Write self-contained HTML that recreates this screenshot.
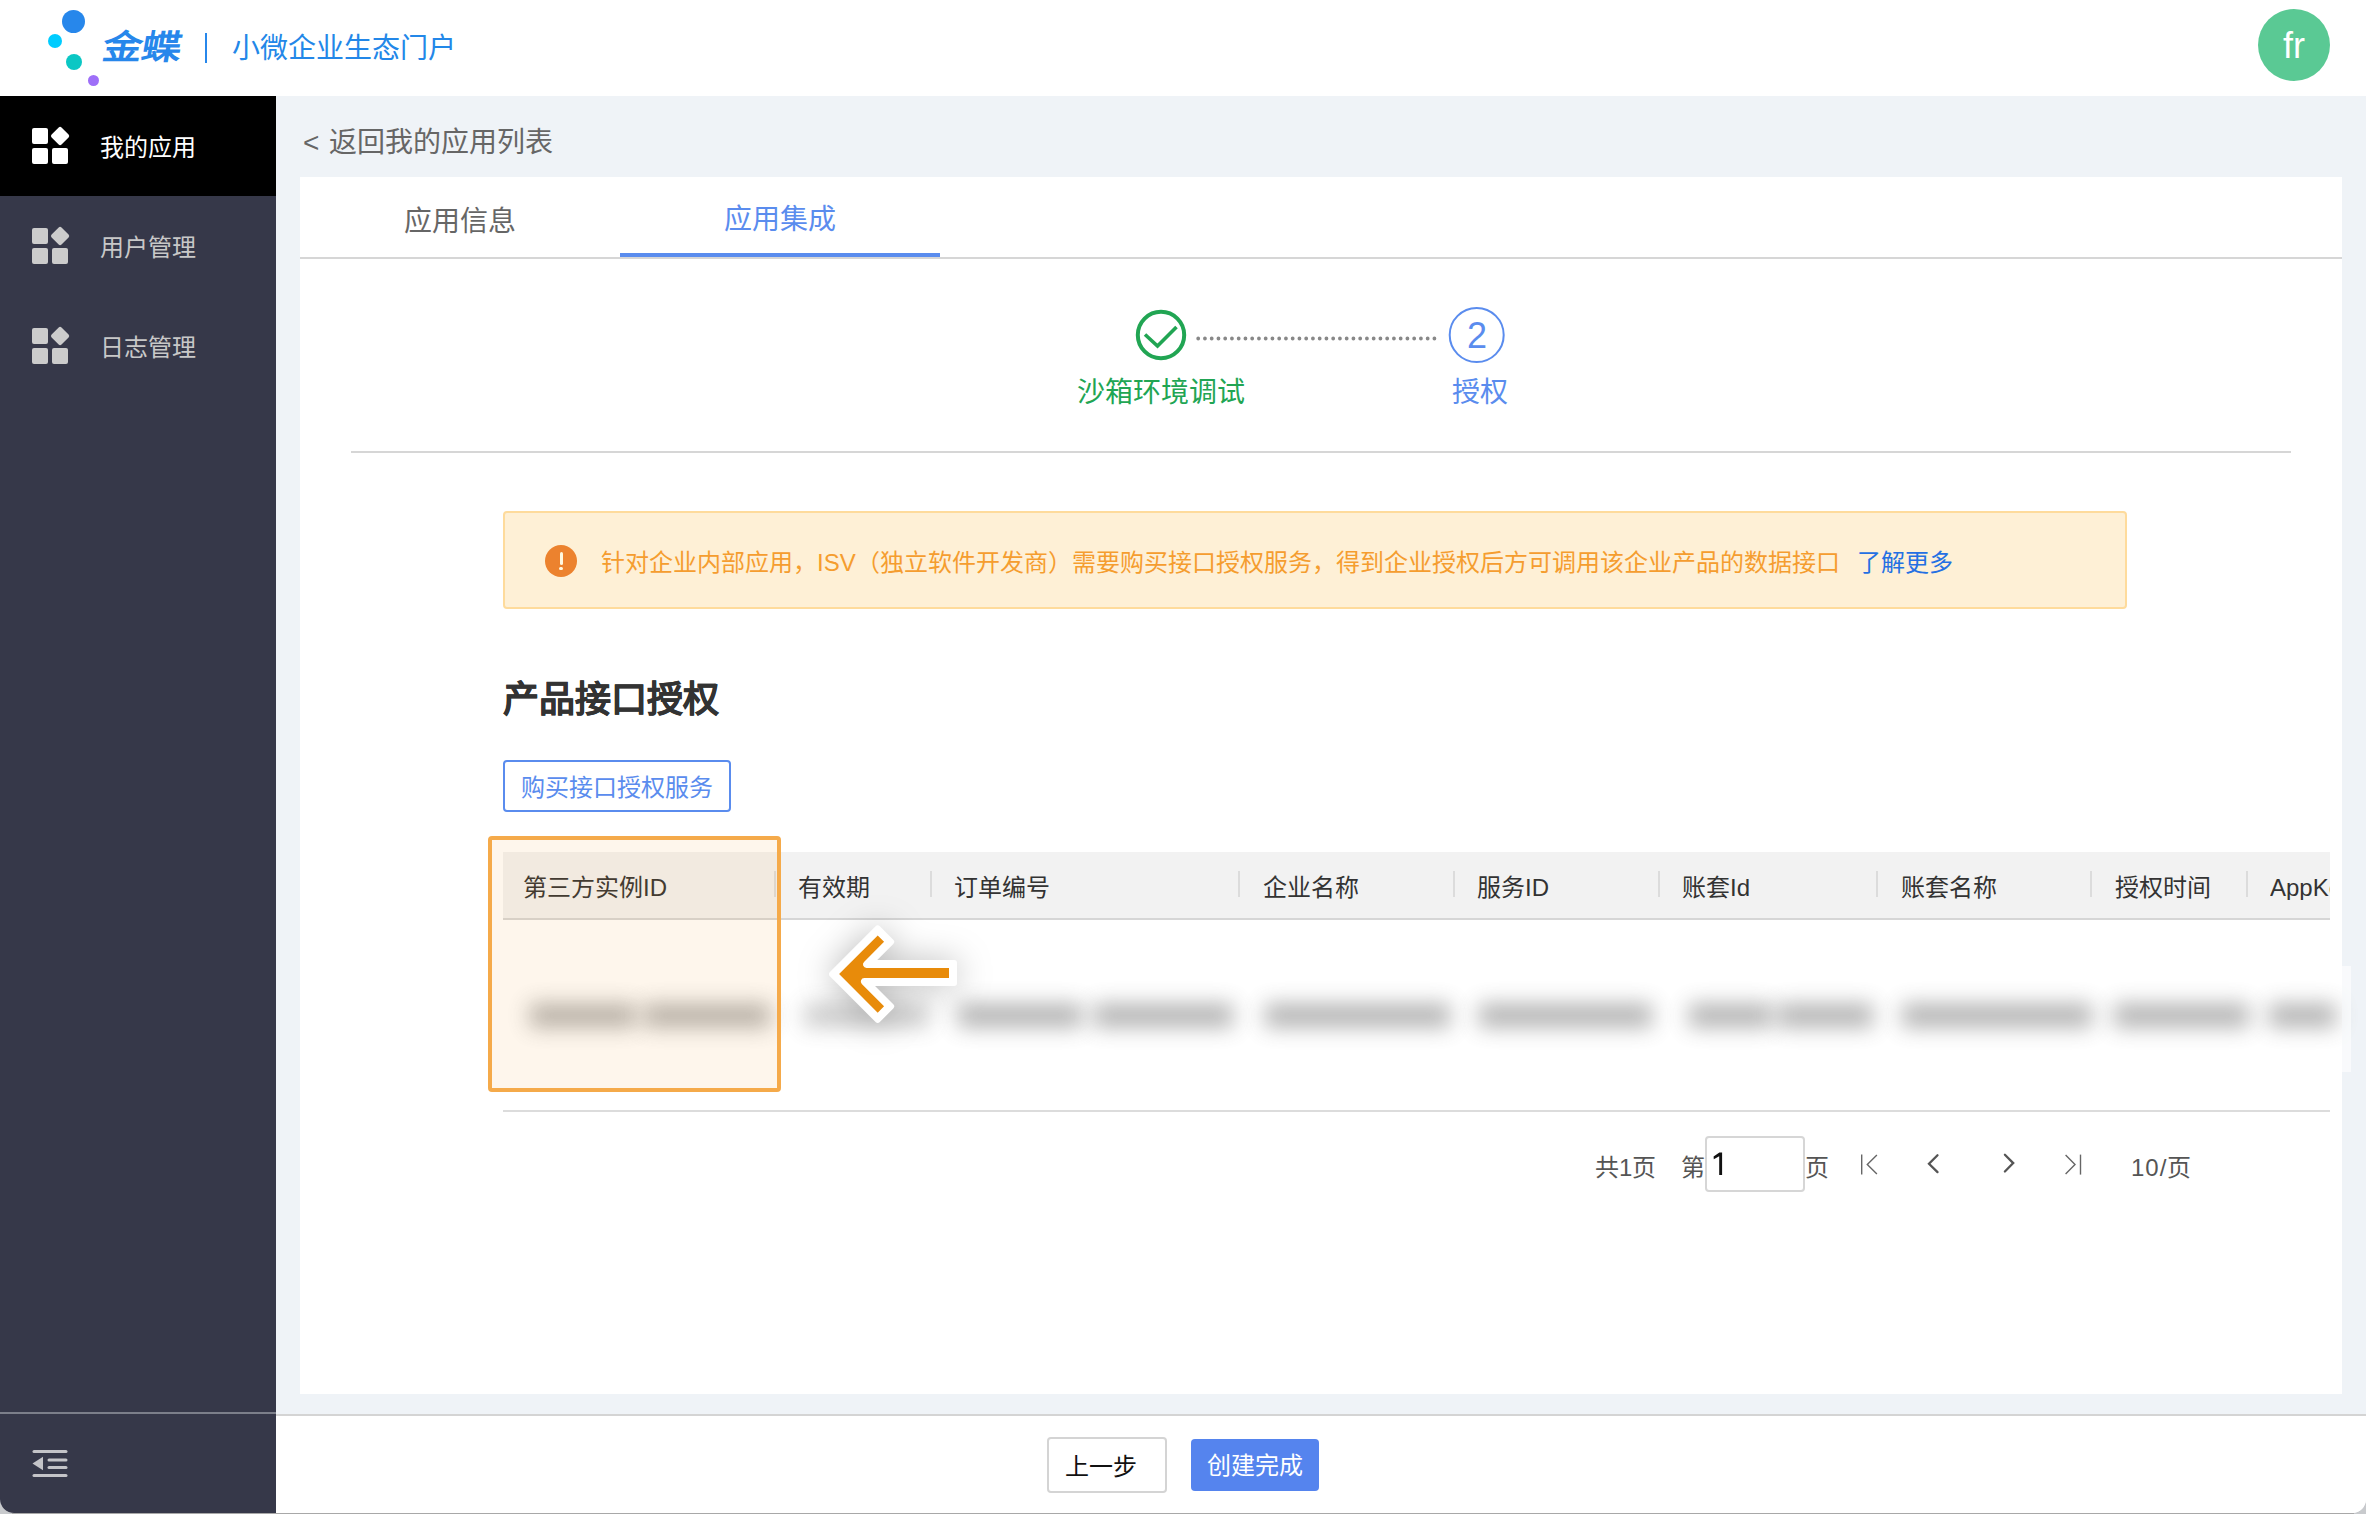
<!DOCTYPE html>
<html lang="zh-CN"><head><meta charset="utf-8">
<style>
*{margin:0;padding:0;box-sizing:border-box}
html,body{width:2366px;height:1514px;overflow:hidden}
body{position:relative;font-family:"Liberation Sans",sans-serif;background:#c8cacd}
#wrap{position:absolute;left:0;top:0;width:2366px;height:1513px;overflow:hidden;border-radius:0 0 14px 14px;background:#fff}
.a{position:absolute;white-space:nowrap;line-height:1}
#hdr{left:0;top:0;width:2366px;height:96px;background:#fff}
#side{left:0;top:96px;width:276px;height:1418px;background:#363849}
#main{left:276px;top:96px;width:2090px;height:1318px;background:#eff3f7}
#card{left:300px;top:177px;width:2042px;height:1217px;background:#fff}
#foot{left:276px;top:1414px;width:2090px;height:100px;background:#fff;border-top:2px solid #d4d4d4}
.sq{position:absolute;width:16px;height:16px;border-radius:2px}
.dm{position:absolute;width:14.2px;height:14.2px;border-radius:2px;transform:rotate(45deg)}
.th{position:absolute;top:875.5px;font-size:24px;color:#333;line-height:24px}
.sep{position:absolute;top:871px;width:2px;height:26px;background:#dcdcdc}
.blob{position:absolute;top:1004px;height:23px;background:#555;filter:blur(10.5px);opacity:.46}
</style></head><body>
<div style="position:absolute;left:12px;top:1513px;width:2342px;height:1px;background:#a8a8a8"></div>
<div id="wrap">

<!-- header -->
<div class="a" id="hdr">
  <div class="a" style="left:62px;top:10px;width:23px;height:23px;border-radius:50%;background:#2787eb"></div>
  <div class="a" style="left:48px;top:34px;width:14px;height:14px;border-radius:50%;background:#00ccff"></div>
  <div class="a" style="left:65.5px;top:54px;width:16px;height:16px;border-radius:50%;background:#0bc7c4"></div>
  <div class="a" style="left:87.5px;top:75px;width:11px;height:11px;border-radius:50%;background:#9e6ff8"></div>
  <div class="a" style="left:100px;top:30px;font-size:34px;font-weight:bold;color:#2787eb;transform:skewX(-10deg) scaleX(1.16);transform-origin:left bottom">金蝶</div>
  <div class="a" style="left:205px;top:33px;width:2px;height:30px;background:#2787eb"></div>
  <div class="a" style="left:232px;top:35px;font-size:28px;color:#2387e8">小微企业生态门户</div>
  <div class="a" style="left:2258px;top:9px;width:72px;height:72px;border-radius:50%;background:#5ac994;color:#fff;font-size:36px;text-align:center;line-height:74px">fr</div>
</div>

<!-- sidebar -->
<div class="a" id="side">
  <div class="a" style="left:0;top:0;width:276px;height:100px;background:#000"></div>
  <!-- item 1 -->
  <div class="sq" style="left:32px;top:32px;background:#fff"></div>
  <div class="sq" style="left:32px;top:52px;background:#fff"></div>
  <div class="sq" style="left:52px;top:52px;background:#fff"></div>
  <div class="dm" style="left:53.2px;top:33.3px;background:#fff"></div>
  <div class="a" style="left:100px;top:39.5px;font-size:24px;color:#fff">我的应用</div>
  <!-- item 2 -->
  <div class="sq" style="left:32px;top:132px;background:#ccc"></div>
  <div class="sq" style="left:32px;top:152px;background:#ccc"></div>
  <div class="sq" style="left:52px;top:152px;background:#ccc"></div>
  <div class="dm" style="left:53.2px;top:133.3px;background:#ccc"></div>
  <div class="a" style="left:100px;top:139.5px;font-size:24px;color:#c8c8c8">用户管理</div>
  <!-- item 3 -->
  <div class="sq" style="left:32px;top:232px;background:#ccc"></div>
  <div class="sq" style="left:32px;top:252px;background:#ccc"></div>
  <div class="sq" style="left:52px;top:252px;background:#ccc"></div>
  <div class="dm" style="left:53.2px;top:233.3px;background:#ccc"></div>
  <div class="a" style="left:100px;top:239.5px;font-size:24px;color:#c8c8c8">日志管理</div>
  <!-- divider -->
  <div class="a" style="left:0;top:1316px;width:276px;height:2px;background:#7c7f8a"></div>
  <!-- collapse icon -->
  <svg class="a" style="left:0;top:1318px" width="276" height="100" viewBox="0 1414 276 100">
    <g fill="#c4c4c8">
      <rect x="32.5" y="1450" width="35" height="3" rx="1.5"/>
      <rect x="47.5" y="1458.5" width="20" height="3" rx="1.5"/>
      <rect x="47.5" y="1466" width="20" height="3" rx="1.5"/>
      <rect x="32.5" y="1474" width="35" height="3" rx="1.5"/>
      <polygon points="32.5,1463.5 43,1456.7 43,1470.3"/>
    </g>
  </svg>
</div>

<!-- main -->
<div class="a" id="main"></div>
<div class="a" style="left:303px;top:128.5px;font-size:28px;color:#666;word-spacing:1.5px">&lt; 返回我的应用列表</div>
<div class="a" id="card"></div>

<!-- tabs -->
<div class="a" style="left:404px;top:208px;font-size:28px;color:#666">应用信息</div>
<div class="a" style="left:724px;top:206px;font-size:28px;color:#5a8cee">应用集成</div>
<div class="a" style="left:300px;top:257px;width:2042px;height:2px;background:#d6d6d6"></div>
<div class="a" style="left:620px;top:253px;width:320px;height:4px;background:#5a8cee"></div>

<!-- steps -->
<svg class="a" style="left:1100px;top:290px" width="440" height="90" viewBox="1100 290 440 90">
  <circle cx="1161" cy="335" r="23.2" fill="none" stroke="#21a553" stroke-width="4"/>
  <polyline points="1145,334.5 1157.5,346 1176.5,327" fill="none" stroke="#21a553" stroke-width="3.6"/>
  <line x1="1198.2" y1="338.5" x2="1435" y2="338.5" stroke="#888" stroke-width="3.8" stroke-dasharray="0 6.749" stroke-linecap="round"/>
  <circle cx="1476.7" cy="335" r="27" fill="none" stroke="#5a8cee" stroke-width="2"/>
</svg>
<div class="a" style="left:1467px;top:318px;font-size:36px;color:#5a8cee">2</div>
<div class="a" style="left:1077px;top:379px;font-size:28px;color:#21a553">沙箱环境调试</div>
<div class="a" style="left:1452px;top:379px;font-size:28px;color:#5a8cee">授权</div>
<div class="a" style="left:351px;top:451px;width:1940px;height:2px;background:#d6d6d6"></div>

<!-- alert -->
<div class="a" style="left:503px;top:511px;width:1624px;height:98px;background:#fef0d6;border:2px solid #fedb9c;border-radius:4px"></div>
<div class="a" style="left:545px;top:545px;width:32px;height:32px;border-radius:50%;background:#ec822e"></div>
<div class="a" style="left:559.5px;top:551.7px;width:3.2px;height:13px;border-radius:1.6px;background:#fff8e0"></div>
<div class="a" style="left:559.4px;top:566.8px;width:3.4px;height:3.4px;border-radius:50%;background:#fff8e0"></div>
<div class="a" style="left:601px;top:550.5px;font-size:24px;color:#f59d2f">针对企业内部应用，ISV（独立软件开发商）需要购买接口授权服务，得到企业授权后方可调用该企业产品的数据接口</div>
<div class="a" style="left:1857px;top:550.5px;font-size:24px;color:#2570e3">了解更多</div>

<!-- heading -->
<div class="a" style="left:503px;top:681.5px;font-size:36px;font-weight:bold;color:#333;-webkit-text-stroke:0.35px #333">产品接口授权</div>
<div class="a" style="left:503px;top:760px;width:228px;height:52px;border:2px solid #5a8cee;border-radius:4px"></div>
<div class="a" style="left:521px;top:775.5px;font-size:24px;color:#5a8cee">购买接口授权服务</div>

<!-- table -->
<div class="a" style="left:503px;top:852px;width:1827px;height:68px;background:#f2f2f2;border-bottom:2px solid #d6d6d6"></div>
<div class="th" style="left:523px">第三方实例ID</div>
<div class="sep" style="left:774px"></div>
<div class="th" style="left:798px">有效期</div>
<div class="sep" style="left:929.5px"></div>
<div class="th" style="left:954px">订单编号</div>
<div class="sep" style="left:1238px"></div>
<div class="th" style="left:1263px">企业名称</div>
<div class="sep" style="left:1452.5px"></div>
<div class="th" style="left:1477px">服务ID</div>
<div class="sep" style="left:1657.5px"></div>
<div class="th" style="left:1682px">账套Id</div>
<div class="sep" style="left:1876px"></div>
<div class="th" style="left:1901px">账套名称</div>
<div class="sep" style="left:2090px"></div>
<div class="th" style="left:2115px">授权时间</div>
<div class="sep" style="left:2245.5px"></div>
<div class="a" style="left:2270px;top:875.5px;width:60px;overflow:hidden;font-size:24px;color:#333;line-height:24px">AppKey</div>

<!-- blurred row -->
<div class="blob" style="left:530px;width:106px"></div>
<div class="blob" style="left:644px;width:126px"></div>
<div class="blob" style="left:804px;width:125px;opacity:.3"></div>
<div class="blob" style="left:958px;width:124px"></div>
<div class="blob" style="left:1094px;width:139px"></div>
<div class="blob" style="left:1265px;width:185px"></div>
<div class="blob" style="left:1479px;width:173px"></div>
<div class="blob" style="left:1689px;width:83px"></div>
<div class="blob" style="left:1778px;width:95px"></div>
<div class="blob" style="left:1902px;width:190px"></div>
<div class="blob" style="left:2114px;width:135px"></div>
<div class="blob" style="left:2269px;width:67px"></div>
<div class="a" style="left:2342px;top:966px;width:9px;height:106px;background:rgba(255,255,255,.6)"></div>
<div class="a" style="left:503px;top:1110px;width:1827px;height:2px;background:#dcdcdc"></div>

<!-- highlight -->
<div class="a" style="left:488px;top:836px;width:293px;height:256px;border:4px solid #f5aa4a;border-radius:4px;background:rgba(240,150,40,.085)"></div>

<!-- arrow -->
<svg class="a" style="left:760px;top:860px;filter:drop-shadow(0 1px 17px rgba(0,0,0,.28))" width="260" height="220" viewBox="760 860 260 220">
  <polygon fill="#fff" stroke="#fff" stroke-width="6" stroke-linejoin="round" points="832.03,974.1 877.7,928.43 891.14,941.87 870.1,962.9 954,962.9 954,983.1 867.9,983.1 891.14,1006.33 877.7,1019.77"/>
  <path fill="#e88b0a" d="M839.1,974.1 L877.7,935.5 L884.07,941.87 L864.01,961.92 A3.5,3.5 0 0 0 866.48,967.9 L949,967.9 L949,978.1 L864.28,978.1 A3.5,3.5 0 0 0 861.81,984.08 L884.07,1006.33 L877.7,1012.7 Z"/>
</svg>

<!-- pagination -->
<div class="a" style="left:1595px;top:1156px;font-size:24px;color:#555">共1页</div>
<div class="a" style="left:1681px;top:1156px;font-size:24px;color:#555">第</div>
<div class="a" style="left:1705px;top:1136px;width:99.5px;height:55.5px;border:2px solid #d6d6d6;border-radius:4px;background:#fff"></div>
<svg class="a" style="left:1710px;top:1150px" width="16" height="28" viewBox="1710 1150 16 28"><polygon fill="#111" points="1719.4,1152.5 1722.1,1152.5 1722.1,1175 1719.2,1175 1719.2,1156.2 1713.8,1159.2 1713.6,1156.6"/></svg>
<div class="a" style="left:1804.5px;top:1156px;font-size:24px;color:#555">页</div>
<svg class="a" style="left:1850px;top:1145px" width="240" height="40" viewBox="1850 1145 240 40">
  <g fill="none" stroke="#666" stroke-width="1.4">
    <line x1="1861.7" y1="1154.6" x2="1861.7" y2="1174.6"/>
    <polyline points="1876.9,1155.1 1867.3,1164.5 1876.9,1173.9"/>
    <polyline points="2065.6,1155.1 2075,1164.5 2065.6,1173.9"/>
    <line x1="2080.5" y1="1154.6" x2="2080.5" y2="1174.6"/>
  </g>
  <g fill="none" stroke="#555" stroke-width="2.3" stroke-linecap="round">
    <polyline points="1937.5,1155.3 1929,1163.8 1937.5,1172.1"/>
    <polyline points="2004.9,1154.8 2013.2,1163.1 2004.9,1171.5"/>
  </g>
</svg>
<div class="a" style="left:2131px;top:1156px;font-size:24px;color:#555;letter-spacing:1px">10/页</div>

<!-- footer -->
<div class="a" id="foot"></div>
<div class="a" style="left:1047px;top:1437px;width:120px;height:56px;border:2px solid #d4d4d4;border-radius:4px;background:#fff"></div>
<div class="a" style="left:1065px;top:1454.5px;font-size:24px;color:#111">上一步</div>
<div class="a" style="left:1191px;top:1439px;width:128px;height:52px;border-radius:4px;background:#5584ee"></div>
<div class="a" style="left:1207px;top:1454px;font-size:24px;color:#fff">创建完成</div>

</div>
</body></html>
